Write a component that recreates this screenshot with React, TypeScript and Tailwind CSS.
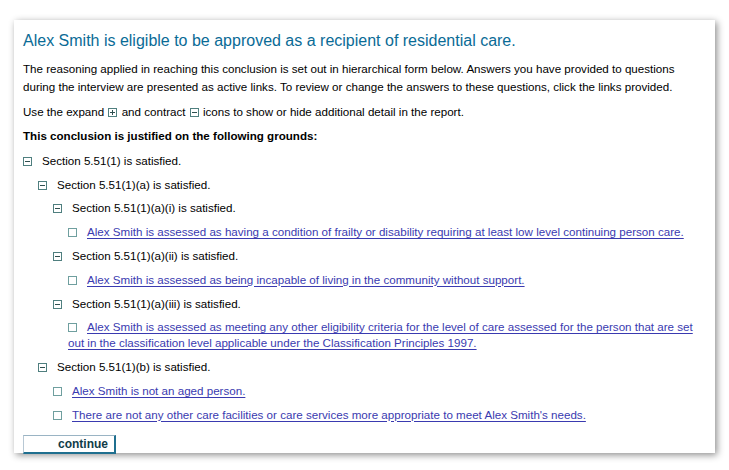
import React from "react";

const Minus = () => (
  <span className="inline-block w-[9px] h-[9px] border border-[#4f7f7f] relative align-[-1px] mr-[10px] bg-white">
    <span className="absolute left-[1px] right-[1px] top-[3px] h-[1px] bg-[#2f4f4f]" />
  </span>
);

const Plus = () => (
  <span className="inline-block w-[9px] h-[9px] border border-[#4f7f7f] relative align-[-1px] mx-[1px] bg-white">
    <span className="absolute left-[1px] right-[1px] top-[3px] h-[1px] bg-[#2f4f4f]" />
    <span className="absolute top-[1px] bottom-[1px] left-[3px] w-[1px] bg-[#2f4f4f]" />
  </span>
);

const Box = () => (
  <span className="inline-block w-[9px] h-[9px] border border-[#6f9f9f] align-[-1px] mr-[10px] bg-white" />
);

const Row = ({ level, children }: { level: number; children: React.ReactNode }) => {
  const pl = ["pl-0", "pl-[15px]", "pl-[30px]", "pl-[45px]"][level];
  return <div className={`${pl} mt-[7.8px] leading-[16px]`}>{children}</div>;
};

const Sec = ({ level, text }: { level: number; text: string }) => (
  <Row level={level}>
    <Minus />
    <span>{text}</span>
  </Row>
);

const Link = ({ level, text }: { level: number; text: string }) => (
  <Row level={level}>
    <Box />
    <a className="text-[#3a3ab0] underline underline-offset-[2px] cursor-pointer">{text}</a>
  </Row>
);

function Minus2() {
  return (
    <span className="inline-block w-[9px] h-[9px] border border-[#4f7f7f] relative align-[-1px] mx-[1px] bg-white">
      <span className="absolute left-[1px] right-[1px] top-[3px] h-[1px] bg-[#2f4f4f]" />
    </span>
  );
}

export default function App() {
  return (
    <div className="w-[729px] h-[470px] bg-white pt-[20px] pl-[14px]" style={{ fontFamily: '"Liberation Sans", Arial, sans-serif' }}>
      <div className="w-[701px] h-[433px] bg-white shadow-[2px_2px_7px_rgba(0,0,0,0.45)] pl-[9px] pr-[20px] pt-[10px] text-[11.6px] text-black">
        <h1 className="text-[16px] leading-[22px] text-[#0a6b96]">
          Alex Smith is eligible to be approved as a recipient of residential care.
        </h1>
        <p className="mt-[8px] leading-[18px]">
          The reasoning applied in reaching this conclusion is set out in hierarchical form below. Answers you have provided to questions during the interview are presented as active links. To review or change the answers to these questions, click the links provided.
        </p>
        <p className="mt-[7px] leading-[18px]">
          Use the expand <Plus /> and contract <Minus2 /> icons to show or hide additional detail in the report.
        </p>
        <p className="mt-[6px] leading-[18px] font-bold">This conclusion is justified on the following grounds:</p>
        <div className="mt-[1px]">
          <Sec level={0} text="Section 5.51(1) is satisfied." />
          <Sec level={1} text="Section 5.51(1)(a) is satisfied." />
          <Sec level={2} text="Section 5.51(1)(a)(i) is satisfied." />
          <Link level={3} text="Alex Smith is assessed as having a condition of frailty or disability requiring at least low level continuing person care." />
          <Sec level={2} text="Section 5.51(1)(a)(ii) is satisfied." />
          <Link level={3} text="Alex Smith is assessed as being incapable of living in the community without support." />
          <Sec level={2} text="Section 5.51(1)(a)(iii) is satisfied." />
          <Link level={3} text="Alex Smith is assessed as meeting any other eligibility criteria for the level of care assessed for the person that are set out in the classification level applicable under the Classification Principles 1997." />
          <Sec level={1} text="Section 5.51(1)(b) is satisfied." />
          <Link level={2} text="Alex Smith is not an aged person." />
          <Link level={2} text="There are not any other care facilities or care services more appropriate to meet Alex Smith's needs." />
        </div>
        <button className="mt-[12px] w-[93px] h-[19px] bg-white border-t border-l border-t-[#9ab4c4] border-l-[#b8c8d4] border-r-2 border-b-2 border-r-[#1f6f8f] border-b-[#1f6f8f] text-right pr-[6px] font-bold text-[12px] leading-[14px] text-[#103c48]">
          continue
        </button>
      </div>
    </div>
  );
}
